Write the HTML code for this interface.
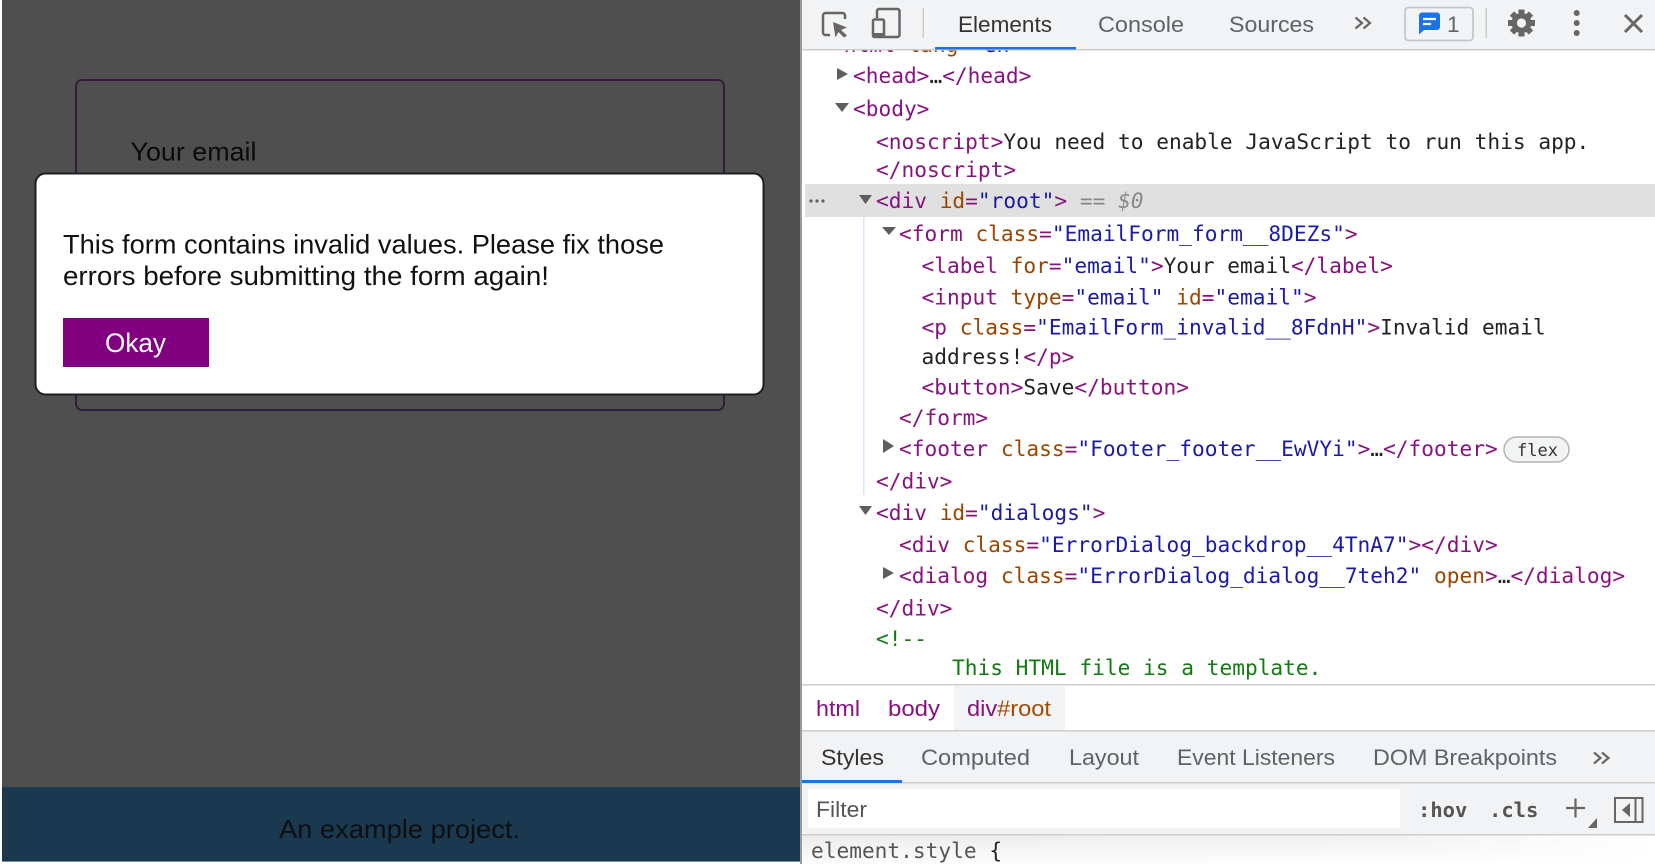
<!DOCTYPE html>
<html lang="en">
<head>
<meta charset="utf-8">
<title>DevTools screenshot</title>
<style>
html,body{margin:0;padding:0;width:1655px;height:864px;overflow:hidden;background:#fff}
svg{display:block;position:absolute;left:0;top:0;filter:blur(.3px)}
.s{font-family:"Liberation Sans",sans-serif}
.m{font-family:"DejaVu Sans Mono","Liberation Mono",monospace;font-size:21.16px;white-space:pre}
.t{fill:#881280}.a{fill:#994500}.v{fill:#1a1aa6}.x{fill:#222}.c{fill:#117a11}
.tab{font-size:22.5px;fill:#5f6368}
</style>
</head>
<body>
<svg width="1655" height="864" viewBox="0 0 1655 864" xmlns="http://www.w3.org/2000/svg">
<defs>
<clipPath id="clipTop"><rect x="802" y="50" width="853" height="20"/></clipPath>
<linearGradient id="sh" x1="0" x2="1" y1="0" y2="0"><stop offset="0" stop-color="#ececec"/><stop offset=".7" stop-color="#f1f1f1"/><stop offset="1" stop-color="#fff"/></linearGradient>
<linearGradient id="fade" x1="0" x2="0" y1="0" y2="1"><stop offset="0" stop-color="#fff" stop-opacity="0"/><stop offset="1" stop-color="#fff" stop-opacity=".9"/></linearGradient>
</defs>

<!-- LEFT PAGE -->
<rect x="0" y="0" width="802" height="864" fill="#fff"/>
<rect x="2" y="0" width="798" height="787" fill="#4f4f4f"/>
<rect x="2" y="787" width="798" height="74" fill="#1b394e"/>
<rect x="2" y="861" width="798" height="1" fill="#71909c"/>
<rect x="800" y="0" width="2" height="864" fill="#9a9a9a"/>
<rect x="76" y="80" width="648" height="330" rx="6" fill="none" stroke="#361b40" stroke-width="2"/>
<text class="s" x="130.500" y="160.500" font-size="26" fill="#0b0b0b" textLength="126" lengthAdjust="spacingAndGlyphs">Your email</text>
<text class="s" x="279" y="838" font-size="26" fill="#0c0f12" textLength="241" lengthAdjust="spacingAndGlyphs">An example project.</text>

<rect x="35.500" y="173.500" width="728" height="221" rx="10" fill="#fff" stroke="#1e1e1e" stroke-width="2"/>
<text class="s" x="63" y="253.500" font-size="26.5" fill="#111" textLength="601" lengthAdjust="spacingAndGlyphs">This form contains invalid values. Please fix those</text>
<text class="s" x="63" y="285" font-size="26.5" fill="#111" textLength="486" lengthAdjust="spacingAndGlyphs">errors before submitting the form again!</text>
<rect x="63" y="318" width="146" height="49" fill="#800080"/>
<text class="s" x="105" y="352" font-size="26.5" fill="#fff" textLength="61" lengthAdjust="spacingAndGlyphs">Okay</text>

<!-- DEVTOOLS BG -->
<rect x="802" y="0" width="853" height="864" fill="#fff"/>

<!-- ELEMENTS TREE -->
<g clip-path="url(#clipTop)">
<text class="m" x="831" y="52"><tspan class="t">&lt;html </tspan><tspan class="a">lang</tspan><tspan class="t">=</tspan><tspan class="v">"en"</tspan><tspan class="t">&gt;</tspan></text>
</g>
<rect x="805" y="184" width="850" height="33" fill="#e0e0e0"/>
<rect x="863" y="217" width="1.5" height="278" fill="#d8e6f7"/>

<g fill="#5e5e5e">
<polygon points="837,68 848,74 837,80"/>
<polygon points="835,103 849,103 842,112"/>
<polygon points="859,195 872,195 865.500,204"/>
<polygon points="882,227 896,227 889,235"/>
<polygon points="883,439 894,446 883,453"/>
<polygon points="859,506 872,506 865.500,515"/>
<polygon points="883,567 894,573 883,579"/>
<circle cx="811" cy="201" r="1.6"/><circle cx="817" cy="201" r="1.6"/><circle cx="823" cy="201" r="1.6"/>
</g>

<text class="m" x="853" y="83"><tspan class="t">&lt;head&gt;</tspan><tspan class="x">…</tspan><tspan class="t">&lt;/head&gt;</tspan></text>
<text class="m" x="853" y="116"><tspan class="t">&lt;body&gt;</tspan></text>
<text class="m" x="876" y="149"><tspan class="t">&lt;noscript&gt;</tspan><tspan class="x">You need to enable JavaScript to run this app.</tspan></text>
<text class="m" x="876" y="177"><tspan class="t">&lt;/noscript&gt;</tspan></text>
<text class="m" x="876" y="208"><tspan class="t">&lt;div </tspan><tspan class="a">id</tspan><tspan class="t">=</tspan><tspan class="v">"root"</tspan><tspan class="t">&gt;</tspan><tspan fill="#888"> == </tspan><tspan fill="#888" font-style="italic">$0</tspan></text>
<text class="m" x="899" y="241"><tspan class="t">&lt;form </tspan><tspan class="a">class</tspan><tspan class="t">=</tspan><tspan class="v">"EmailForm_form__8DEZs"</tspan><tspan class="t">&gt;</tspan></text>
<text class="m" x="921.500" y="273"><tspan class="t">&lt;label </tspan><tspan class="a">for</tspan><tspan class="t">=</tspan><tspan class="v">"email"</tspan><tspan class="t">&gt;</tspan><tspan class="x">Your email</tspan><tspan class="t">&lt;/label&gt;</tspan></text>
<text class="m" x="921.500" y="304.500"><tspan class="t">&lt;input </tspan><tspan class="a">type</tspan><tspan class="t">=</tspan><tspan class="v">"email"</tspan><tspan class="a"> id</tspan><tspan class="t">=</tspan><tspan class="v">"email"</tspan><tspan class="t">&gt;</tspan></text>
<text class="m" x="921.500" y="334.500"><tspan class="t">&lt;p </tspan><tspan class="a">class</tspan><tspan class="t">=</tspan><tspan class="v">"EmailForm_invalid__8FdnH"</tspan><tspan class="t">&gt;</tspan><tspan class="x">Invalid email</tspan></text>
<text class="m" x="921.500" y="364"><tspan class="x">address!</tspan><tspan class="t">&lt;/p&gt;</tspan></text>
<text class="m" x="921.500" y="394.500"><tspan class="t">&lt;button&gt;</tspan><tspan class="x">Save</tspan><tspan class="t">&lt;/button&gt;</tspan></text>
<text class="m" x="899" y="425"><tspan class="t">&lt;/form&gt;</tspan></text>
<text class="m" x="899" y="456"><tspan class="t">&lt;footer </tspan><tspan class="a">class</tspan><tspan class="t">=</tspan><tspan class="v">"Footer_footer__EwVYi"</tspan><tspan class="t">&gt;</tspan><tspan class="x">…</tspan><tspan class="t">&lt;/footer&gt;</tspan></text>
<rect x="1504" y="437" width="65" height="25" rx="12.500" fill="#f1f3f4" stroke="#b5b5b5" stroke-width="1.500"/>
<text x="1517" y="456" font-family="'DejaVu Sans Mono',monospace" font-size="17" fill="#333">flex</text>
<text class="m" x="876" y="488.500"><tspan class="t">&lt;/div&gt;</tspan></text>
<text class="m" x="876" y="520"><tspan class="t">&lt;div </tspan><tspan class="a">id</tspan><tspan class="t">=</tspan><tspan class="v">"dialogs"</tspan><tspan class="t">&gt;</tspan></text>
<text class="m" x="899" y="552"><tspan class="t">&lt;div </tspan><tspan class="a">class</tspan><tspan class="t">=</tspan><tspan class="v">"ErrorDialog_backdrop__4TnA7"</tspan><tspan class="t">&gt;&lt;/div&gt;</tspan></text>
<text class="m" x="899" y="583"><tspan class="t">&lt;dialog </tspan><tspan class="a">class</tspan><tspan class="t">=</tspan><tspan class="v">"ErrorDialog_dialog__7teh2"</tspan><tspan class="a"> open</tspan><tspan class="t">&gt;</tspan><tspan class="x">…</tspan><tspan class="t">&lt;/dialog&gt;</tspan></text>
<text class="m" x="876" y="615.500"><tspan class="t">&lt;/div&gt;</tspan></text>
<text class="m c" x="876" y="646">&lt;!--</text>
<text class="m c" x="952" y="675">This HTML file is a template.</text>

<!-- TOP TOOLBAR -->
<rect x="802" y="0" width="853" height="49" fill="#f1f3f4"/>
<rect x="802" y="49" width="853" height="1.500" fill="#cdcdcd"/>
<path d="M830 35H825.500a2.500 2.500 0 0 1-2.500-2.500V15.500a2.500 2.500 0 0 1 2.500-2.500H842.500a2.500 2.500 0 0 1 2.500 2.500V19" fill="none" stroke="#666" stroke-width="2.500"/>
<polygon points="833,22 847,27.500 841,30 847,35.500 844,37.500 838.500,32 835.500,37.500" fill="#666"/>
<path d="M877 18V11a2 2 0 0 1 2-2H897.500a2 2 0 0 1 2 2V35a2 2 0 0 1-2 2H884" fill="none" stroke="#666" stroke-width="2.500"/>
<rect x="873" y="19.500" width="11" height="17.500" rx="1.500" fill="none" stroke="#666" stroke-width="2.500"/>
<rect x="873" y="33" width="11" height="4" fill="#666"/>
<rect x="922.500" y="8" width="1.500" height="30" fill="#ccc"/>

<text class="s" x="958" y="32" font-size="22.5" fill="#333" textLength="94" lengthAdjust="spacingAndGlyphs">Elements</text>
<text class="s tab" x="1098" y="32" textLength="86" lengthAdjust="spacingAndGlyphs">Console</text>
<text class="s tab" x="1229" y="32" textLength="85" lengthAdjust="spacingAndGlyphs">Sources</text>
<rect x="935" y="47" width="141" height="2.500" fill="#1a73e8"/>

<path d="M1355.500 17.500l6.500 5.500-6.500 5.500M1363.500 17.500l6.500 5.500-6.500 5.500" fill="none" stroke="#666" stroke-width="2.200"/>
<rect x="1405" y="7.500" width="68" height="33" rx="3.500" fill="#f1f3f4" stroke="#c5c7ca" stroke-width="1.800"/>
<path d="M1422 12.500H1437a3 3 0 0 1 3 3V27a3 3 0 0 1-3 3H1424l-5 4.500V15.500a3 3 0 0 1 3-3z" fill="#1a73e8"/>
<path d="M1423 19h13M1423 24h8" stroke="#fff" stroke-width="2.200" fill="none"/>
<text class="s" x="1447" y="32" font-size="22.5" fill="#5f6368">1</text>
<rect x="1485.500" y="8" width="1.500" height="30" fill="#ccc"/>

<g transform="translate(1521.500 23)" fill="#666">
<g id="teeth">
<rect x="-3" y="-13.500" width="6" height="27"/>
<rect x="-3" y="-13.500" width="6" height="27" transform="rotate(45)"/>
<rect x="-3" y="-13.500" width="6" height="27" transform="rotate(90)"/>
<rect x="-3" y="-13.500" width="6" height="27" transform="rotate(135)"/>
</g>
<circle r="10"/>
<circle r="4.600" fill="#f1f3f4"/>
</g>
<g fill="#666"><circle cx="1576.700" cy="13" r="3"/><circle cx="1576.700" cy="23" r="3"/><circle cx="1576.700" cy="33" r="3"/></g>
<path d="M1625 15L1642 32M1642 15L1625 32" stroke="#666" stroke-width="3" fill="none"/>

<!-- BREADCRUMBS -->
<rect x="802" y="684" width="853" height="1.500" fill="#cdcdcd"/>
<rect x="954" y="686" width="111" height="44" fill="#f1f3f4"/>
<text class="s" x="816" y="716" font-size="22.5" fill="#881280" textLength="44" lengthAdjust="spacingAndGlyphs">html</text>
<text class="s" x="888" y="716" font-size="22.5" fill="#881280" textLength="52" lengthAdjust="spacingAndGlyphs">body</text>
<text class="s" x="967" y="716" font-size="22.5" textLength="84" lengthAdjust="spacingAndGlyphs"><tspan fill="#881280">div</tspan><tspan fill="#a64a00">#root</tspan></text>

<!-- STYLES TABS -->
<rect x="802" y="730" width="853" height="104" fill="#f1f3f4"/>
<rect x="802" y="730" width="853" height="1.500" fill="#cdcdcd"/>
<rect x="802" y="782" width="853" height="1.500" fill="#cdcdcd"/>
<rect x="802" y="780" width="100" height="3" fill="#1a73e8"/>
<text class="s" x="821" y="765" font-size="22.5" fill="#333" textLength="63" lengthAdjust="spacingAndGlyphs">Styles</text>
<text class="s tab" x="921" y="765" textLength="109" lengthAdjust="spacingAndGlyphs">Computed</text>
<text class="s tab" x="1069" y="765" textLength="70" lengthAdjust="spacingAndGlyphs">Layout</text>
<text class="s tab" x="1177" y="765" textLength="158" lengthAdjust="spacingAndGlyphs">Event Listeners</text>
<text class="s tab" x="1373" y="765" textLength="184" lengthAdjust="spacingAndGlyphs">DOM Breakpoints</text>
<path d="M1594 752.500l6.500 5.500-6.500 5.500M1602 752.500l6.500 5.500-6.500 5.500" fill="none" stroke="#666" stroke-width="2.200"/>

<!-- FILTER -->
<rect x="808" y="789" width="592" height="39" fill="#fff"/>
<text class="s" x="816" y="817" font-size="22.5" fill="#555" textLength="51" lengthAdjust="spacingAndGlyphs">Filter</text>
<text x="1418" y="817" font-family="'DejaVu Sans Mono',monospace" font-weight="bold" font-size="20.5" fill="#555">:hov</text>
<text x="1489" y="817" font-family="'DejaVu Sans Mono',monospace" font-weight="bold" font-size="20.5" fill="#555">.cls</text>
<path d="M1566 808H1585M1575.500 798.500V817.500" stroke="#666" stroke-width="2.200" fill="none"/>
<polygon points="1597,818 1597,828 1588,828" fill="#666"/>
<rect x="1615" y="798" width="27.500" height="24" fill="none" stroke="#666" stroke-width="2"/>
<rect x="1634.500" y="798" width="2" height="24" fill="#666"/>
<polygon points="1630,803 1630,817 1622,810" fill="#666"/>
<rect x="802" y="834" width="853" height="1.500" fill="#cdcdcd"/>

<!-- BOTTOM -->
<rect x="802" y="835.500" width="853" height="28.500" fill="url(#sh)"/>
<rect x="802" y="835.500" width="853" height="28.500" fill="url(#fade)"/>
<text class="m" x="811" y="858"><tspan fill="#555">element.style </tspan><tspan fill="#222">{</tspan></text>
</svg>
</body>
</html>
